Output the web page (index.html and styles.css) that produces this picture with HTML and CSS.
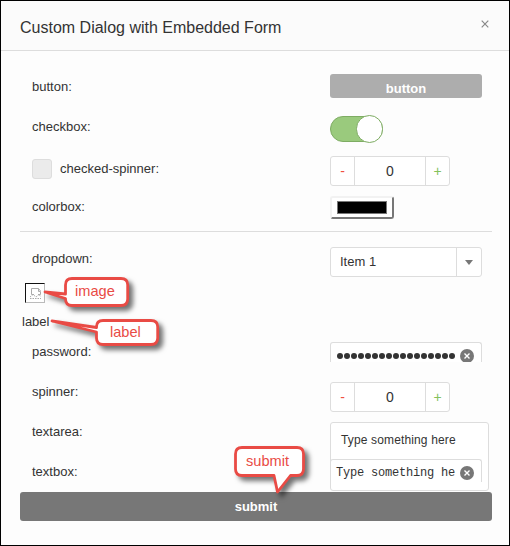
FILE: index.html
```html
<!DOCTYPE html>
<html lang="en">
<head>
<meta charset="utf-8">
<title>Custom Dialog with Embedded Form</title>
<link rel="stylesheet" href="styles.css">
</head>
<body>
<div class="dialog">
  <header class="header">
    <h1 class="title">Custom Dialog with Embedded Form</h1>
    <svg class="close" width="8" height="8" viewBox="0 0 8 8"><path d="M.7.7 7.3 7.3M7.3.7.7 7.3"/></svg>
  </header>
  <main class="body">
    <div class="row"><span class="name">button:</span><div class="button">button</div></div>
    <div class="row"><span class="name">checkbox:</span><div class="toggle"><span class="knob"></span></div></div>
    <div class="row row-checked"><span class="name"><span class="check"></span>checked-spinner:</span>
      <div class="spinner"><span class="minus">-</span><span class="value">0</span><span class="plus">+</span></div></div>
    <div class="row"><span class="name">colorbox:</span><div class="colorbox"><span class="swatch"></span></div></div>
    <hr class="rule">
    <div class="row"><span class="name">dropdown:</span>
      <div class="dropdown"><span class="item">Item 1</span><span class="arrow"><svg width="8" height="5" viewBox="0 0 8 5"><path d="M0 0h8L4 5z"/></svg></span></div></div>
    <div class="image"><svg width="20" height="20" viewBox="0 0 20 20"><path d="M6.500 11.500V5.500H13.500V8.500H15.500V11.500H13M6.500 11.500H9M13.500 5.500 15.500 8"/><path stroke-dasharray="1.500 1" d="M5 14 8 11.500 11 14 14 11.500 16 14M5 15.500H16"/></svg></div>
    <div class="label">label</div>
    <div class="row"><span class="name">password:</span>
      <div class="field password"><span class="dots"><i></i><i></i><i></i><i></i><i></i><i></i><i></i><i></i><i></i><i></i><i></i><i></i><i></i><i></i><i></i><i></i><i></i></span>
        <svg class="clear" width="14" height="14" viewBox="0 0 14 14"><circle cx="7" cy="7" r="7"/><path d="m4.500 4.500 5 5m0-5-5 5"/></svg></div></div>
    <div class="row row-spinner"><span class="name">spinner:</span>
      <div class="spinner"><span class="minus">-</span><span class="value">0</span><span class="plus">+</span></div></div>
    <div class="row"><span class="name">textarea:</span><div class="textarea">Type something here</div></div>
    <div class="row"><span class="name">textbox:</span>
      <div class="field textbox"><span class="mono">Type something he</span>
        <svg class="clear" width="14" height="14" viewBox="0 0 14 14"><circle cx="7" cy="7" r="7"/><path d="m4.500 4.500 5 5m0-5-5 5"/></svg></div></div>
    <div class="submit">submit</div>
  </main>
  <svg class="callouts" width="510" height="546" viewBox="0 0 510 546">
    <path d="M72 278.500H121Q127.700 278.500 127.700 285V299Q127.700 305.500 121 305.500H72Q65.500 305.500 65.500 299V298.500L45 292 65.500 294V285Q65.500 278.500 72 278.500Z"/>
    <path d="M103 320.500H151Q157.700 320.500 157.700 327V338Q157.700 344.500 151 344.500H103Q96.500 344.500 96.500 338V332L52 321 96.500 327.500V327Q96.500 320.500 103 320.500Z"/>
    <path d="M242 447.500H297Q303.500 447.500 303.500 454V469Q303.500 475.500 297 475.500H290.500L277.500 492 274 475.500H242Q235.500 475.500 235.500 469V454Q235.500 447.500 242 447.500Z"/>
    <text x="75" y="296">image</text>
    <text x="110" y="337">label</text>
    <text x="246" y="466">submit</text>
  </svg>
</div>
</body>
</html>
```
FILE: styles.css
```css
* { box-sizing: border-box; }
body { margin: 0; font: 13px "Liberation Sans", Arial, sans-serif; color: #333; }
.dialog { position: relative; width: 510px; height: 546px; border: 1px solid #000; background: #fdfdfd; overflow: hidden; }
.header { display: flex; justify-content: space-between; height: 50px; padding: 0 19px; border-bottom: 1px solid #ddd; background: #fbfbfb; }
.title { margin: 0; padding-top: 15px; font-size: 16px; line-height: 24px; font-weight: 400; white-space: nowrap; }
.close { margin: 19px 1px 0 0; stroke: #888; stroke-width: 1.2; }
.body { padding: 15px 17px 0 19px; }
.row { display: flex; align-items: flex-start; height: 40px; padding-left: 12px; }
.name { display: flex; flex: 0 0 298px; align-items: center; padding-top: 11px; line-height: 20px; white-space: nowrap; }
.row-checked .name { padding-top: 12px; line-height: 22px; }
.check { width: 20px; height: 20px; margin-right: 8px; border: 1px solid #ddd; border-radius: 3px; background: #ebebeb; }
.button { width: 152px; height: 24px; margin-top: 8px; border-radius: 3px; background: #adadad; color: #fff; font-weight: 700; line-height: 29px; text-align: center; }
.toggle { display: flex; justify-content: flex-end; align-items: center; width: 53px; height: 26px; margin-top: 10px; border: 1px solid #7eac63; border-radius: 13px; background: #9aca7d; }
.knob { flex: none; width: 27px; height: 28px; margin-right: -1px; border: 1px solid #7eac63; border-radius: 14px; background: #fff; }
.spinner { display: flex; width: 120px; height: 30px; margin-top: 10px; border: 1px solid #ddd; border-radius: 3px; background: #fff; font-size: 14px; line-height: 29px; text-align: center; }
.row-spinner .spinner { margin-top: 11px; }
.minus, .plus { width: 23px; }
.minus { color: #f0503f; }
.plus { color: #84c25c; }
.value { width: 72px; border: solid #ddd; border-width: 0 1px; }
.colorbox { width: 64px; height: 23px; margin-top: 10px; padding: 3px 5px; border: 2px solid; border-color: #f2f2f2 #777 #777 #f2f2f2; border-radius: 3px; background: #fff; }
.swatch { display: block; width: 50px; height: 13px; border: 1px solid #777; background: #000; }
.rule { height: 1px; margin: 5px 0 6px; border: 0; background: #ddd; }
.dropdown { display: flex; width: 152px; height: 30px; margin-top: 9px; border: 1px solid #ddd; border-radius: 3px; background: #fff; line-height: 28px; }
.item { flex: 1; padding-left: 9px; }
.arrow { display: flex; justify-content: center; align-items: center; width: 25px; border-left: 1px solid #ddd; fill: #777; }
.image { width: 20px; height: 20px; margin: 5px 0 0 5px; border: 1px solid; border-color: #111 #bbb #bbb #111; background: #fff; }
.image svg { display: block; margin: -1px; fill: none; stroke: #aaa; }
.label { height: 28px; padding-left: 2px; line-height: 38px; }
.field { display: flex; align-items: center; width: 152px; border: 1px solid #ddd; border-bottom: 0; border-radius: 3px 3px 0 0; background: #fff; overflow: hidden; }
.password { height: 20px; margin-top: 11px; padding: 7px 0 0 6px; }
.dots { display: flex; gap: 1px; flex: 1; }
.dots i { width: 6px; height: 6px; border-radius: 3px; background: #333; }
.clear { flex: none; margin-right: 7px; fill: #777; }
.clear path { fill: none; stroke: #fff; stroke-width: 1.4; }
.textarea { width: 159px; height: 69px; margin-top: 11px; padding: 9px 10px; border: 1px solid #ddd; border-radius: 3px; background: #fff; font-size: 12px; line-height: 17px; letter-spacing: .14px; white-space: nowrap; }
.textbox { position: relative; z-index: 1; height: 23px; margin-top: 8px; padding: 3px 0 0 5px; }
.mono { flex: 1; font: 12px "Liberation Mono", "Courier New", monospace; letter-spacing: -.2px; white-space: nowrap; }
.submit { height: 29px; margin-top: 1px; border-radius: 3px; background: #777; color: #fff; font-weight: 700; line-height: 29px; text-align: center; }
.callouts { position: absolute; left: -1px; top: -1px; z-index: 2; }
.callouts path { fill: #fff; stroke: #e94b45; stroke-width: 2.800; stroke-linejoin: round; filter: drop-shadow(4px 4px 2.500px rgba(0, 0, 0, .55)); }
.callouts text { fill: #e94b45; font-size: 14.600px; }
```
